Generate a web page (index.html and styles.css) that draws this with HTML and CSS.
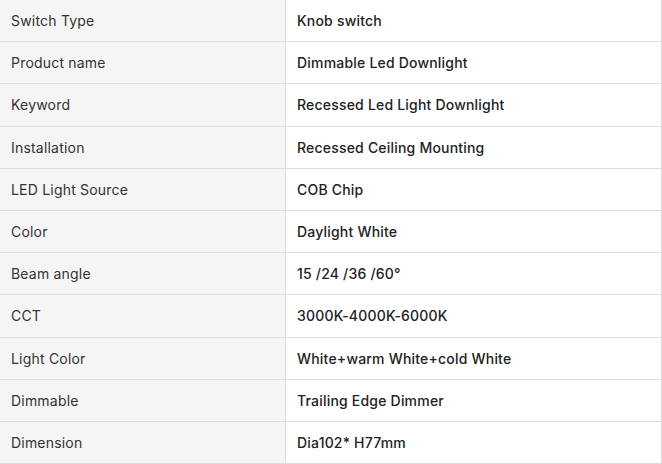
FILE: index.html
```html
<!DOCTYPE html>
<html>
<head>
<meta charset="utf-8">
<link rel="stylesheet" href="styles.css">
</head>
<body>
<div class="spec">
  <div class="row"><div class="key">Switch Type</div><div class="val">Knob switch</div></div>
  <div class="row"><div class="key">Product name</div><div class="val">Dimmable Led Downlight</div></div>
  <div class="row"><div class="key">Keyword</div><div class="val">Recessed Led Light Downlight</div></div>
  <div class="row"><div class="key">Installation</div><div class="val">Recessed Ceiling Mounting</div></div>
  <div class="row"><div class="key">LED Light Source</div><div class="val">COB Chip</div></div>
  <div class="row"><div class="key">Color</div><div class="val">Daylight White</div></div>
  <div class="row"><div class="key">Beam angle</div><div class="val">15 /24 /36 /60°</div></div>
  <div class="row"><div class="key">CCT</div><div class="val">3000K-4000K-6000K</div></div>
  <div class="row"><div class="key">Light Color</div><div class="val">White+warm White+cold White</div></div>
  <div class="row"><div class="key">Dimmable</div><div class="val">Trailing Edge Dimmer</div></div>
  <div class="row"><div class="key">Dimension</div><div class="val">Dia102* H77mm</div></div>
</div>
</body>
</html>
```
FILE: styles.css
```css
html, body {
  margin: 0;
  padding: 0;
  background: #fff;
}
body {
  font-family: Inter, "Liberation Sans", sans-serif;
  font-size: 14px;
  letter-spacing: 0.2px;
  color: #333;
}
.spec {
  width: 662px;
  display: flex;
  flex-direction: column;
}
.row {
  display: grid;
  grid-template-columns: 286px 1fr;
  height: 42.2px;
  box-sizing: border-box;
  border-bottom: 1px solid #dcdcdc;
}
.key {
  background: #f5f5f5;
  border-right: 1px solid #dcdcdc;
  padding-left: 11px;
  display: flex;
  align-items: center;
  color: #333;
}
.val {
  padding-left: 11px;
  display: flex;
  align-items: center;
  font-weight: 500;
  color: #222;
  border-right: 1px solid #dcdcdc;
}
```
